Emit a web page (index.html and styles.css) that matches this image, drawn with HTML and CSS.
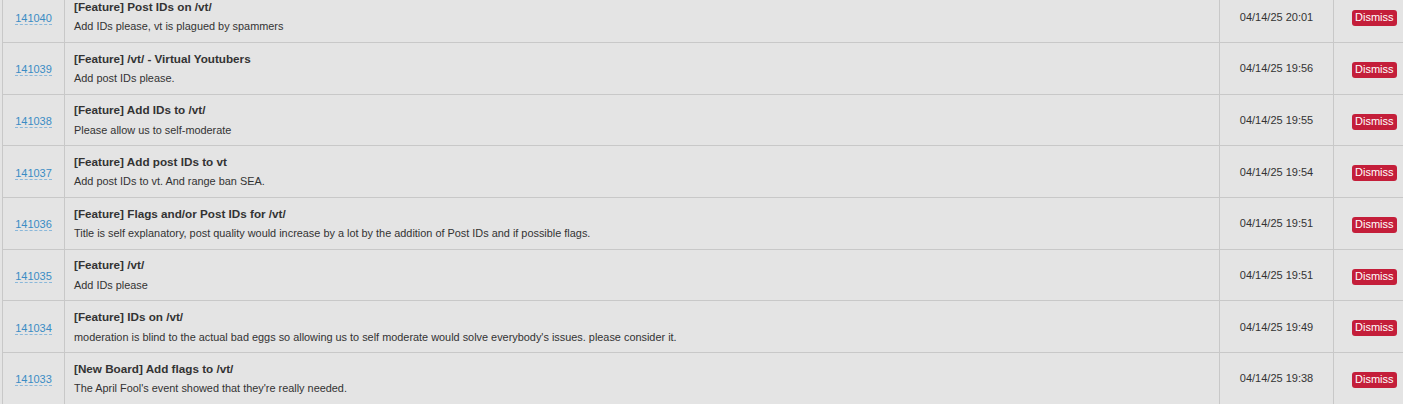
FILE: index.html
```html
<!DOCTYPE html>
<html>
<head>
<meta charset="utf-8">
<link rel="stylesheet" href="styles.css">
</head>
<body>
<table class="reports">
  <tbody>
    <tr>
      <td class="col-id"><a class="rid" href="#">141040</a></td>
      <td class="col-body"><div class="title">[Feature] Post IDs on /vt/</div><div class="desc">Add IDs please, vt is plagued by spammers</div></td>
      <td class="col-date">04/14/25 20:01</td>
      <td class="col-act"><button class="dismiss">Dismiss</button></td>
    </tr>
    <tr>
      <td class="col-id"><a class="rid" href="#">141039</a></td>
      <td class="col-body"><div class="title">[Feature] /vt/ - Virtual Youtubers</div><div class="desc">Add post IDs please.</div></td>
      <td class="col-date">04/14/25 19:56</td>
      <td class="col-act"><button class="dismiss">Dismiss</button></td>
    </tr>
    <tr>
      <td class="col-id"><a class="rid" href="#">141038</a></td>
      <td class="col-body"><div class="title">[Feature] Add IDs to /vt/</div><div class="desc">Please allow us to self-moderate</div></td>
      <td class="col-date">04/14/25 19:55</td>
      <td class="col-act"><button class="dismiss">Dismiss</button></td>
    </tr>
    <tr>
      <td class="col-id"><a class="rid" href="#">141037</a></td>
      <td class="col-body"><div class="title">[Feature] Add post IDs to vt</div><div class="desc">Add post IDs to vt. And range ban SEA.</div></td>
      <td class="col-date">04/14/25 19:54</td>
      <td class="col-act"><button class="dismiss">Dismiss</button></td>
    </tr>
    <tr>
      <td class="col-id"><a class="rid" href="#">141036</a></td>
      <td class="col-body"><div class="title">[Feature] Flags and/or Post IDs for /vt/</div><div class="desc">Title is self explanatory, post quality would increase by a lot by the addition of Post IDs and if possible flags.</div></td>
      <td class="col-date">04/14/25 19:51</td>
      <td class="col-act"><button class="dismiss">Dismiss</button></td>
    </tr>
    <tr>
      <td class="col-id"><a class="rid" href="#">141035</a></td>
      <td class="col-body"><div class="title">[Feature] /vt/</div><div class="desc">Add IDs please</div></td>
      <td class="col-date">04/14/25 19:51</td>
      <td class="col-act"><button class="dismiss">Dismiss</button></td>
    </tr>
    <tr>
      <td class="col-id"><a class="rid" href="#">141034</a></td>
      <td class="col-body"><div class="title">[Feature] IDs on /vt/</div><div class="desc">moderation is blind to the actual bad eggs so allowing us to self moderate would solve everybody's issues. please consider it.</div></td>
      <td class="col-date">04/14/25 19:49</td>
      <td class="col-act"><button class="dismiss">Dismiss</button></td>
    </tr>
    <tr>
      <td class="col-id"><a class="rid" href="#">141033</a></td>
      <td class="col-body"><div class="title">[New Board] Add flags to /vt/</div><div class="desc">The April Fool's event showed that they're really needed.</div></td>
      <td class="col-date">04/14/25 19:38</td>
      <td class="col-act"><button class="dismiss">Dismiss</button></td>
    </tr>
  </tbody>
</table>
</body>
</html>
```
FILE: styles.css
```css
html, body {
  margin: 0;
  padding: 0;
  background: #e4e4e4;
  overflow: hidden;
}
body {
  font-family: "Liberation Sans", Arial, sans-serif;
  color: #333;
}
.reports {
  border-collapse: collapse;
  margin: -9.7px 0 0 2px;
  width: 1418px;
  table-layout: fixed;
}
.reports td {
  border: 1px solid #c8c8c8;
  height: 51.7px;
  box-sizing: border-box;
  padding: 0;
  vertical-align: middle;
}
.col-id {
  width: 62px;
  text-align: center;
}
.col-body {
  padding-left: 9px !important;
}
.col-date {
  width: 114px;
  text-align: center;
  font-size: 11px;
}
.col-act {
  width: 86px;
  padding-left: 18px !important;
}
.rid {
  font-size: 11px;
  color: #3a8cc4;
  text-decoration: none;
  border-bottom: 1px dashed #8ab8da;
}
.title {
  font-size: 11.7px;
  font-weight: bold;
  line-height: 16px;
}
.desc {
  font-size: 10.9px;
  line-height: 16px;
  margin-top: 3.5px;
}
.dismiss {
  font-family: "Liberation Sans", Arial, sans-serif;
  font-size: 11px;
  color: #fff;
  background: #c41e3a;
  border: 0;
  border-radius: 3px;
  padding: 1px 3px 2px;
  line-height: 13px;
}
```
